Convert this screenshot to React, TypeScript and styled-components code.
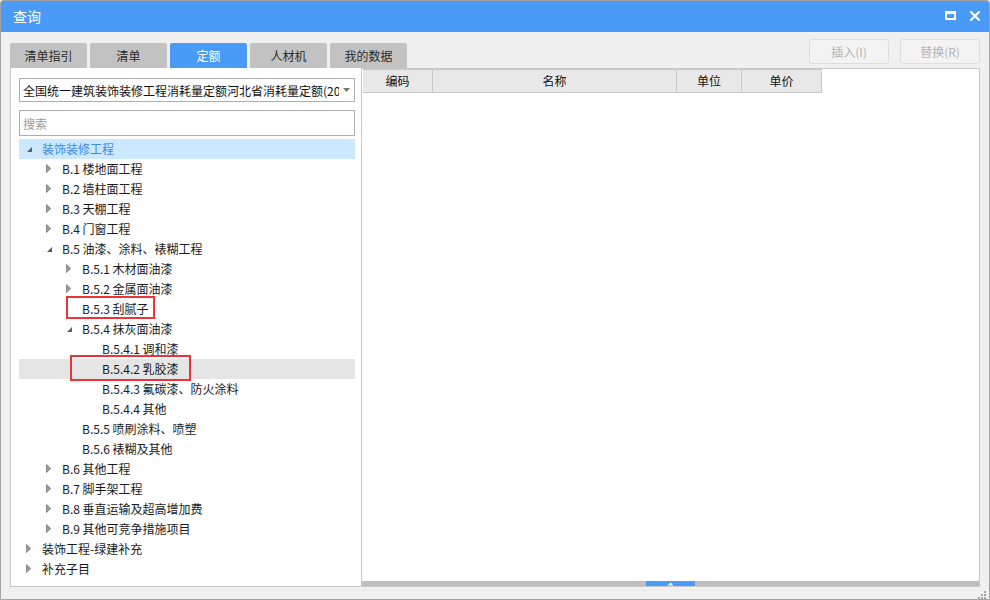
import React from 'react';
import styled, { createGlobalStyle } from 'styled-components';

const GlobalStyle = createGlobalStyle`
  html, body {
    margin: 0;
    padding: 0;
    background: #ffffff;
  }
  body {
    font-family: "Noto Sans CJK SC", "Noto Sans", "Liberation Sans", sans-serif;
    font-size: 12px;
    color: #1a1a1a;
  }
  * { box-sizing: border-box; }
`;

const Window = styled.div`
  position: relative;
  width: 990px;
  height: 600px;
  border: 1px solid #a3a3a3;
  border-radius: 3px 3px 0 0;
  background: #f0f0f0;
  display: flex;
  flex-direction: column;
  overflow: hidden;
`;

const TitleBar = styled.div`
  height: 31px;
  flex: none;
  background: #4a9bf8;
  color: #ffffff;
  display: flex;
  align-items: center;
  justify-content: space-between;
  padding: 0 9px 0 12px;
  font-size: 14px;
`;

const TitleText = styled.span`
  line-height: 31px;
`;

const TitleButtons = styled.div`
  display: flex;
  align-items: center;
  gap: 14px;
  padding-bottom: 2px;
`;

const Body = styled.div`
  flex: 1;
  display: flex;
  flex-direction: column;
  padding: 7px 9px 12px 9px;
  min-height: 0;
`;

const TopRow = styled.div`
  height: 29px;
  flex: none;
  display: flex;
  justify-content: space-between;
`;

const Tabs = styled.div`
  display: flex;
  gap: 3px;
  align-self: flex-end;
`;

const Tab = styled.div<{ $active?: boolean }>`
  width: 77px;
  height: 25px;
  border-radius: 2px 2px 0 0;
  background: ${p => (p.$active ? '#4a9bf8' : '#c2c2c2')};
  color: ${p => (p.$active ? '#ffffff' : '#2b2b2b')};
  display: flex;
  align-items: center;
  justify-content: center;
  font-size: 12px;
  padding-bottom: 1px;
`;

const Actions = styled.div`
  display: flex;
  gap: 11px;
  align-self: flex-start;
`;

const ActionButton = styled.button`
  width: 80px;
  height: 25px;
  border: 1px solid #dcdcdc;
  border-radius: 3px;
  background: #f3f3f3;
  color: #b3b3b3;
  font-family: inherit;
  font-size: 12px;
  padding: 0;
`;

const Main = styled.div`
  flex: 1;
  display: flex;
  min-height: 0;
`;

const LeftPanel = styled.div`
  width: 351px;
  flex: none;
  background: #ffffff;
  border-left: 1px solid #c9c9c9;
  border-bottom: 1px solid #c9c9c9;
  padding: 10px 6px 0 8px;
  display: flex;
  flex-direction: column;
`;

const Select = styled.div`
  height: 24px;
  border: 1px solid #adadad;
  display: flex;
  align-items: center;
  padding: 0 4px 0 3px;
  gap: 4px;
`;

const SelectText = styled.span`
  flex: 1;
  white-space: nowrap;
  overflow: hidden;
  text-overflow: clip;
  font-size: 12px;
  color: #111;
`;

const SearchBox = styled.div`
  height: 26px;
  margin-top: 8px;
  border: 1px solid #adadad;
  display: flex;
  align-items: center;
  padding-left: 3px;
  color: #9a9a9a;
  font-size: 12px;
`;

const Tree = styled.div`
  margin-top: 3px;
  display: flex;
  flex-direction: column;
`;

const Row = styled.div<{ $level: number; $selected?: boolean; $hover?: boolean }>`
  position: relative;
  height: 20px;
  display: flex;
  align-items: center;
  padding-left: ${p => p.$level * 20 + 7}px;
  padding-bottom: 1px;
  background: ${p => (p.$selected ? '#cce8ff' : p.$hover ? '#e5e5e5' : 'transparent')};
  color: ${p => (p.$selected ? '#3a8ae6' : '#1a1a1a')};
  white-space: nowrap;
`;

const Arrow = styled.span`
  width: 16px;
  flex: none;
  display: flex;
  align-items: center;
`;

const Mark = styled.div<{ $left: number; $top: number; $w: number; $h: number }>`
  position: absolute;
  left: ${p => p.$left}px;
  top: ${p => p.$top}px;
  width: ${p => p.$w}px;
  height: ${p => p.$h}px;
  border: 2px solid #ee3338;
  pointer-events: none;
`;

const RightPanel = styled.div`
  flex: 1;
  background: #ffffff;
  border: 1px solid #c9c9c9;
  display: flex;
  flex-direction: column;
`;

const HeaderRow = styled.div`
  display: flex;
  height: 24px;
  margin-left: 1px;
`;

const HeaderCell = styled.div<{ $w: number }>`
  width: ${p => p.$w}px;
  height: 24px;
  background: #e8e8e8;
  border-top: 1px solid #c8c8c8;
  border-bottom: 1px solid #c8c8c8;
  border-right: 1px solid #c8c8c8;
  display: flex;
  align-items: center;
  justify-content: center;
  font-size: 12px;
  color: #111;
  padding-bottom: 1px;
`;

const Spacer = styled.div`
  flex: 1;
`;

const ScrollBar = styled.div`
  height: 5px;
  background: #bdbdbd;
  display: flex;
`;

const ScrollThumb = styled.div`
  margin-left: 284px;
  width: 49px;
  height: 5px;
  background: #4a9bf8;
  display: flex;
  align-items: center;
  justify-content: center;
`;

const Grip = styled.div`
  position: absolute;
  right: 1px;
  bottom: 1px;
  width: 11px;
  height: 11px;
`;

type Node = {
  label: string;
  level: number;
  state: 'open' | 'closed' | 'leaf';
  selected?: boolean;
  hover?: boolean;
  mark?: { left: number; top: number; w: number; h: number };
};

const nodes: Node[] = [
  { label: '装饰装修工程', level: 0, state: 'open', selected: true },
  { label: 'B.1 楼地面工程', level: 1, state: 'closed' },
  { label: 'B.2 墙柱面工程', level: 1, state: 'closed' },
  { label: 'B.3 天棚工程', level: 1, state: 'closed' },
  { label: 'B.4 门窗工程', level: 1, state: 'closed' },
  { label: 'B.5 油漆、涂料、裱糊工程', level: 1, state: 'open' },
  { label: 'B.5.1 木材面油漆', level: 2, state: 'closed' },
  { label: 'B.5.2 金属面油漆', level: 2, state: 'closed' },
  { label: 'B.5.3 刮腻子', level: 2, state: 'leaf', mark: { left: 47, top: -3, w: 89, h: 23 } },
  { label: 'B.5.4 抹灰面油漆', level: 2, state: 'open' },
  { label: 'B.5.4.1 调和漆', level: 3, state: 'leaf' },
  { label: 'B.5.4.2 乳胶漆', level: 3, state: 'leaf', hover: true, mark: { left: 51, top: -4, w: 121, h: 26 } },
  { label: 'B.5.4.3 氟碳漆、防火涂料', level: 3, state: 'leaf' },
  { label: 'B.5.4.4 其他', level: 3, state: 'leaf' },
  { label: 'B.5.5 喷刷涂料、喷塑', level: 2, state: 'leaf' },
  { label: 'B.5.6 裱糊及其他', level: 2, state: 'leaf' },
  { label: 'B.6 其他工程', level: 1, state: 'closed' },
  { label: 'B.7 脚手架工程', level: 1, state: 'closed' },
  { label: 'B.8 垂直运输及超高增加费', level: 1, state: 'closed' },
  { label: 'B.9 其他可竞争措施项目', level: 1, state: 'closed' },
  { label: '装饰工程-绿建补充', level: 0, state: 'closed' },
  { label: '补充子目', level: 0, state: 'closed' },
];

const TreeArrow = ({ state }: { state: Node['state'] }) => {
  if (state === 'leaf') return <Arrow />;
  if (state === 'open') {
    return (
      <Arrow>
        <svg width="7" height="7" viewBox="0 0 7 7" style={{ marginTop: 2 }}>
          <path d="M6 1 L6 6 L1 6 Z" fill="#5e5e5e" />
        </svg>
      </Arrow>
    );
  }
  return (
    <Arrow>
      <svg width="6" height="9" viewBox="0 0 6 9">
        <path d="M0.5 0.5 L4.8 4.5 L0.5 8.5 Z" fill="#9a9a9a" stroke="#7c7c7c" strokeWidth="0.8" />
      </svg>
    </Arrow>
  );
};

const columns = [
  { title: '编码', w: 70 },
  { title: '名称', w: 244 },
  { title: '单位', w: 65 },
  { title: '单价', w: 80 },
];

export default function App() {
  return (
    <>
      <GlobalStyle />
      <Window>
        <TitleBar>
          <TitleText>查询</TitleText>
          <TitleButtons>
            <svg width="11" height="9" viewBox="0 0 11 9">
              <rect x="1" y="1.5" width="9" height="6.5" fill="none" stroke="#fff" strokeWidth="2" />
              <rect x="0" y="0" width="11" height="3" fill="#fff" />
            </svg>
            <svg width="10" height="10" viewBox="0 0 10 10">
              <path d="M1 1 L9 9 M9 1 L1 9" stroke="#fff" strokeWidth="2" strokeLinecap="square" />
            </svg>
          </TitleButtons>
        </TitleBar>
        <Body>
          <TopRow>
            <Tabs>
              <Tab>清单指引</Tab>
              <Tab>清单</Tab>
              <Tab $active>定额</Tab>
              <Tab>人材机</Tab>
              <Tab>我的数据</Tab>
            </Tabs>
            <Actions>
              <ActionButton disabled>插入(I)</ActionButton>
              <ActionButton disabled>替换(R)</ActionButton>
            </Actions>
          </TopRow>
          <Main>
            <LeftPanel>
              <Select>
                <SelectText>全国统一建筑装饰装修工程消耗量定额河北省消耗量定额(2012)</SelectText>
                <svg width="7" height="4" viewBox="0 0 7 4">
                  <path d="M0 0 L7 0 L3.5 4 Z" fill="#777" />
                </svg>
              </Select>
              <SearchBox>搜索</SearchBox>
              <Tree>
                {nodes.map((n, i) => (
                  <Row key={i} $level={n.level} $selected={n.selected} $hover={n.hover}>
                    <TreeArrow state={n.state} />
                    <span>{n.label}</span>
                    {n.mark && <Mark $left={n.mark.left} $top={n.mark.top} $w={n.mark.w} $h={n.mark.h} />}
                  </Row>
                ))}
              </Tree>
            </LeftPanel>
            <RightPanel>
              <HeaderRow>
                {columns.map(c => (
                  <HeaderCell key={c.title} $w={c.w}>{c.title}</HeaderCell>
                ))}
              </HeaderRow>
              <Spacer />
              <ScrollBar>
                <ScrollThumb>
                  <svg width="7" height="4" viewBox="0 0 7 4">
                    <path d="M3.5 0.5 L6.5 3.5 L0.5 3.5 Z" fill="#fff" />
                  </svg>
                </ScrollThumb>
              </ScrollBar>
            </RightPanel>
          </Main>
        </Body>
        <Grip>
          <svg width="11" height="11" viewBox="0 0 11 11">
            <rect x="7" y="1" width="2" height="2" fill="#a6a6a6" />
            <rect x="4" y="4" width="2" height="2" fill="#a6a6a6" />
            <rect x="7" y="4" width="2" height="2" fill="#a6a6a6" />
            <rect x="1" y="7" width="2" height="2" fill="#a6a6a6" />
            <rect x="4" y="7" width="2" height="2" fill="#a6a6a6" />
            <rect x="7" y="7" width="2" height="2" fill="#a6a6a6" />
          </svg>
        </Grip>
      </Window>
    </>
  );
}
